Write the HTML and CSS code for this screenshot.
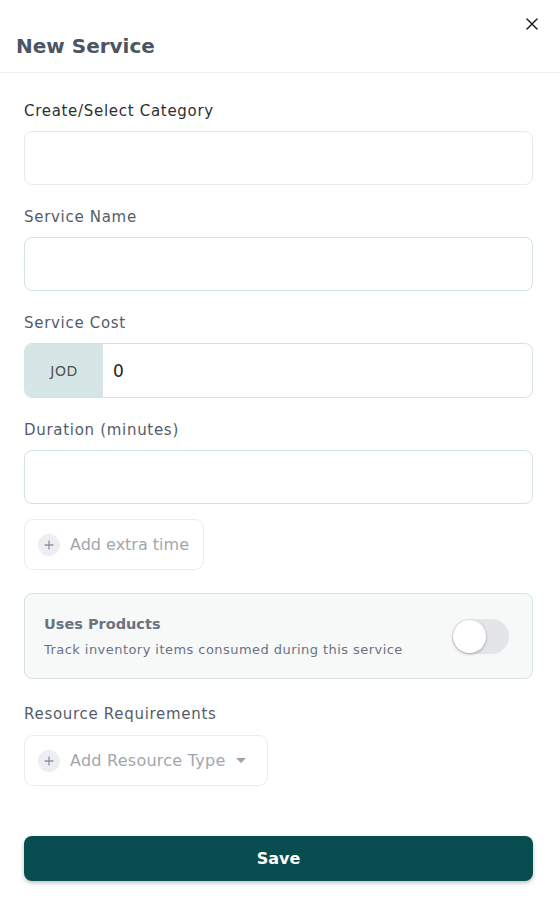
FILE: index.html
```html
<!DOCTYPE html>
<html lang="en">
<head>
<meta charset="utf-8">
<title>New Service</title>
<link rel="stylesheet" href="styles.css">
</head>
<body>
<div class="dialog">
  <header class="dialog-header">
    <h1 class="dialog-title">New Service</h1>
    <button class="close-btn" aria-label="Close">
      <svg width="12" height="12" viewBox="0 0 12 12"><path d="M1 1L11 11M11 1L1 11" stroke="#1f1f1f" stroke-width="1.5" stroke-linecap="round"/></svg>
    </button>
  </header>
  <main class="dialog-body">
    <div class="field">
      <label class="label label-dark">Create/Select Category</label>
      <div class="input input-faint"></div>
    </div>
    <div class="field">
      <label class="label">Service Name</label>
      <div class="input"></div>
    </div>
    <div class="field">
      <label class="label">Service Cost</label>
      <div class="input input-group">
        <span class="prefix">JOD</span>
        <span class="value">0</span>
      </div>
    </div>
    <div class="field">
      <label class="label">Duration (minutes)</label>
      <div class="input"></div>
    </div>
    <button class="ghost-btn extra-btn">
      <span class="plus"><svg width="10" height="10" viewBox="0 0 10 10"><path d="M5 0.5V9.5M0.5 5H9.5" stroke="#8f949c" stroke-width="1.3"/></svg></span>
      <span>Add extra time</span>
    </button>
    <section class="card">
      <div class="card-text">
        <div class="card-title">Uses Products</div>
        <div class="card-sub">Track inventory items consumed during this service</div>
      </div>
      <div class="switch"><span class="thumb"></span></div>
    </section>
    <label class="label res-label">Resource Requirements</label>
    <button class="ghost-btn res-btn">
      <span class="plus"><svg width="10" height="10" viewBox="0 0 10 10"><path d="M5 0.5V9.5M0.5 5H9.5" stroke="#8f949c" stroke-width="1.3"/></svg></span>
      <span>Add Resource Type</span>
      <svg class="caret" width="10" height="5" viewBox="0 0 10 5"><path d="M0 0H10L5 5Z" fill="#9ca1aa"/></svg>
    </button>
    <button class="save-btn">Save</button>
  </main>
</div>
</body>
</html>
```
FILE: styles.css
```css
* { box-sizing: border-box; }
html, body { margin: 0; padding: 0; background: #fff; }
body { font-family: "DejaVu Sans", "Open Sans", sans-serif; color: #333; }

.dialog { width: 560px; }

.dialog-header {
  height: 73px;
  border-bottom: 1px solid #eeeeee;
  display: flex;
  justify-content: space-between;
  align-items: flex-start;
  padding: 0 16px;
}
.dialog-title {
  margin: 30px 0 0;
  font-size: 20px;
  font-weight: 700;
  line-height: 32px;
  color: #4b5563;
}
.close-btn {
  margin-top: 18px;
  margin-right: 6px;
  border: 0;
  background: transparent;
  padding: 0;
  width: 12px;
  height: 12px;
  display: flex;
}

.dialog-body {
  padding: 25px 27px 20px 24px;
  display: flex;
  flex-direction: column;
}

.field { display: flex; flex-direction: column; margin-bottom: 19px; }
.label {
  display: block;
  font-size: 15px;
  letter-spacing: 0.7px;
  line-height: 22px;
  font-weight: 400;
  color: #555c69;
  padding-top: 2px;
  margin-bottom: 9px;
}
.label-dark { color: #2f2f2f; }

.input {
  height: 54px;
  border: 1px solid #d5e3e3;
  border-radius: 8px;
  background: #fff;
}
.input-faint { border-color: #e6eced; }
.input-group {
  display: flex;
  align-items: center;
  overflow: hidden;
  height: 55px;
}
.prefix {
  width: 78px;
  height: 100%;
  background: #d6e6e6;
  display: flex;
  align-items: center;
  justify-content: center;
  font-size: 14px;
  letter-spacing: 0.5px;
  color: #505050;
}
.value { padding-left: 10px; font-size: 17px; color: #222; }

.ghost-btn {
  display: flex;
  align-items: center;
  gap: 10px;
  height: 51px;
  border: 1px solid #ececec;
  border-radius: 9px;
  background: #fff;
  padding: 0 14px 0 13px;
  font-family: inherit;
  font-size: 16px;
  white-space: nowrap;
  color: #a2a6ae;
  align-self: flex-start;
}
.extra-btn { margin-top: -4px; }
.plus {
  width: 22px;
  height: 22px;
  border-radius: 50%;
  background: #eceef1;
  display: flex;
  align-items: center;
  justify-content: center;
  flex-shrink: 0;
}

.card {
  margin-top: 23px;
  height: 86px;
  border: 1px solid #d6e3e3;
  border-radius: 8px;
  background: #f7f9f9;
  display: flex;
  align-items: center;
  justify-content: space-between;
  padding: 0 23px 0 19px;
}
.card-title { font-size: 14.5px; font-weight: 700; line-height: 22px; color: #6b7280; }
.card-sub { font-size: 13px; letter-spacing: 0.45px; line-height: 20px; color: #6b7280; margin-top: 5px; }

.switch {
  width: 57px;
  height: 35px;
  border-radius: 18px;
  background: #e4e5e8;
  position: relative;
  flex-shrink: 0;
}
.thumb {
  position: absolute;
  left: 1px;
  top: 1px;
  width: 33px;
  height: 33px;
  border-radius: 50%;
  background: #fff;
  box-shadow: 0 1px 3px rgba(0,0,0,0.3);
}

.res-label { margin-top: 22px; margin-bottom: 10px; }
.res-btn { padding-right: 21px; letter-spacing: 0.25px; }

.save-btn {
  margin-top: 50px;
  height: 45px;
  border: 0;
  border-radius: 8px;
  background: #074d4f;
  color: #fff;
  font-family: inherit;
  font-size: 16px;
  font-weight: 700;
  box-shadow: 0 2px 4px rgba(0,0,0,0.25);
}
```
